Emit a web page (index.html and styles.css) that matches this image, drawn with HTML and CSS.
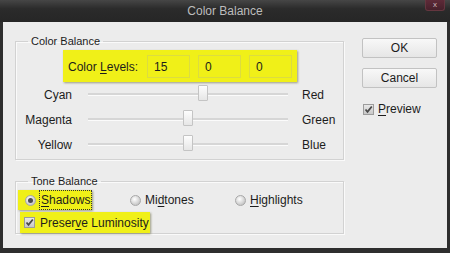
FILE: index.html
```html
<!DOCTYPE html>
<html lang="en">
<head>
    <meta charset="UTF-8">
    <title>Color Balance</title>
    <link rel="stylesheet" href="styles.css">
</head>
<body>
<div class="window">
    <div class="titlebar">
        <span></span>
        <span class="title">Color Balance</span>
        <span class="close">x</span>
    </div>
    <div class="dialog">
        <div class="main">
            <fieldset class="group">
                <legend>Color Balance</legend>
                <div class="levels mark">
                    <label class="levels-label">Color <u>L</u>evels:</label>
                    <input class="level" type="text" value="15">
                    <input class="level" type="text" value="0">
                    <input class="level" type="text" value="0">
                </div>
                <div class="slider-row">
                    <span class="from">Cyan</span>
                    <div class="track"><span class="thumb" style="left: 110px"></span></div>
                    <span class="to">Red</span>
                </div>
                <div class="slider-row">
                    <span class="from">Magenta</span>
                    <div class="track"><span class="thumb" style="left: 95px"></span></div>
                    <span class="to">Green</span>
                </div>
                <div class="slider-row">
                    <span class="from">Yellow</span>
                    <div class="track"><span class="thumb" style="left: 95px"></span></div>
                    <span class="to">Blue</span>
                </div>
            </fieldset>

            <fieldset class="group tone">
                <legend>Tone Balance</legend>
                <div class="radios">
                    <div class="option mark shadows">
                        <span class="radio on"></span><span class="focus"><u>S</u>hadows</span>
                    </div>
                    <div class="option">
                        <span class="radio"></span><span>Mi<u>d</u>tones</span>
                    </div>
                    <div class="option">
                        <span class="radio"></span><span><u>H</u>ighlights</span>
                    </div>
                </div>
                <div class="option mark preserve">
                    <span class="check"><svg width="9" height="9" viewBox="0 0 9 9"><polyline points="1.5,4.5 3.5,6.8 7.8,1.5" fill="none" stroke="#4a4a4a" stroke-width="1.8"/></svg></span><span>Preser<u>v</u>e Luminosity</span>
                </div>
            </fieldset>
        </div>

        <div class="side">
            <button class="btn">OK</button>
            <button class="btn cancel">Cancel</button>
            <div class="preview">
                <span class="check"><svg width="9" height="9" viewBox="0 0 9 9"><polyline points="1.5,4.5 3.5,6.8 7.8,1.5" fill="none" stroke="#4a4a4a" stroke-width="1.8"/></svg></span><span><u>P</u>review</span>
            </div>
        </div>
    </div>
</div>
</body>
</html>
```

FILE: styles.css
```css
body { margin: 0; font-family: "Liberation Sans", Arial, sans-serif; font-size: 12px; color: #1c1c1c; background: #2e2e2e; }
u { text-decoration-thickness: 1px; text-underline-offset: 2px; }

.window { width: 450px; height: 253px; display: flex; flex-direction: column; background: #2e2e2e; }
.titlebar { height: 22px; display: grid; grid-template-columns: 1fr auto 1fr; align-items: center; background: linear-gradient(#464646, #2b2b2b 40%, #262626); color: #bdbdbd; font-size: 12px; }
.title { padding-bottom: 1px; }
.close { justify-self: end; align-self: start; width: 18px; height: 10px; margin-right: 5px; background: linear-gradient(#5e2a38, #46202b); border: 1px solid #64363f; border-top: none; border-radius: 0 0 3px 3px; color: #cdb8bd; font-size: 8px; line-height: 9px; text-align: center; }

.dialog { flex: 1; display: flex; margin: 0 3px 5px 3px; padding: 12px 0 0 12px; background: #ececec; }
.main { width: 329px; }

.group { margin: 0; padding: 0 0 2px 0; width: 329px; box-sizing: border-box; border: 1px solid #d2d2d2; box-shadow: inset 1px 1px 0 #fafafa, 1px 1px 0 #fafafa; }
.group legend { margin-left: 12px; padding: 0 3px; font-size: 11px; line-height: 14px; }
.tone { margin-top: 14px; padding-bottom: 0; }

.mark { background: #f0f018; box-shadow: 1px 1px 2px rgba(60, 60, 0, 0.45); }

.levels { display: flex; align-items: center; gap: 8px; width: 234px; height: 32px; box-sizing: border-box; margin: 2px 0 0 47px; padding: 1px 5px 0 5px; }
.levels-label { width: 71px; }
.level { width: 43px; height: 23px; box-sizing: border-box; margin: 0; padding: 0 0 0 6px; border: 1px solid #dcdc40; background: #f0f018; font-family: inherit; font-size: 12px; color: #1c1c1c; outline: none; }

.slider-row { display: grid; grid-template-columns: 56px 200px auto; column-gap: 16px; align-items: center; height: 25px; }
.slider-row:first-of-type { margin-top: 2px; }
.slider-row .to { margin-left: -2px; }
.from { text-align: right; }
.track { position: relative; height: 2px; background: #d6d6d6; border-bottom: 1px solid #fbfbfb; }
.thumb { position: absolute; top: -8px; width: 10px; height: 16px; box-sizing: border-box; background: linear-gradient(#fdfdfd, #e6e6e6); border: 1px solid #c4c4c4; border-radius: 1px; }

.radios { display: grid; grid-template-columns: 105px 105px auto; margin: 2px 0 0 2px; height: 20px; }
.option { display: flex; align-items: center; }
.shadows { width: 74px; padding-left: 7px; box-sizing: border-box; }
.radios .option:not(.shadows) { padding-left: 7px; }
.radio { width: 11px; height: 11px; box-sizing: border-box; margin-right: 4px; border: 1px solid #a8a8a8; border-radius: 50%; background: radial-gradient(circle at 40% 35%, #ffffff, #c6c6c6 75%); display: flex; align-items: center; justify-content: center; }
.radio.on::after { content: ""; width: 5px; height: 5px; border-radius: 50%; background: #4a4a4a; }
.focus { padding: 2px 1px; outline: 1px dotted #333; }

.preserve { display: inline-flex; height: 21px; margin: 2px 0 0 4px; padding: 0 1px 0 4px; gap: 5px; }
.check { width: 11px; height: 11px; box-sizing: border-box; border: 1px solid #9c9c9c; background: linear-gradient(#e8e8e8, #c8c8c8); display: flex; align-items: center; justify-content: center; }

.side { width: 75px; margin-left: 18px; padding-top: 4px; display: flex; flex-direction: column; }
.btn { width: 75px; height: 20px; margin: 0; padding: 0; border: 1px solid #c2c2c2; border-radius: 2px; background: linear-gradient(#f8f8f8, #e6e6e6); font-family: inherit; font-size: 12px; color: #1c1c1c; }
.cancel { margin-top: 10px; }
.preview { display: flex; align-items: center; gap: 4px; margin: 14px 0 0 1px; }
```
